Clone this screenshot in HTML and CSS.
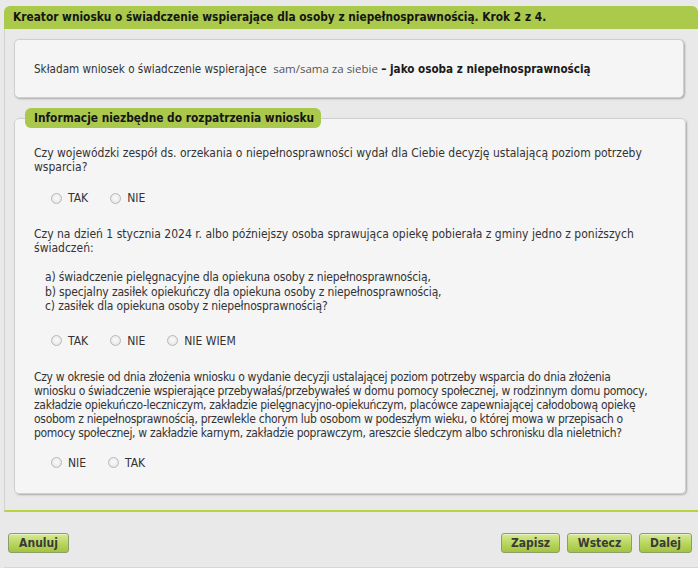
FILE: index.html
```html
<!DOCTYPE html>
<html lang="pl">
<head>
<meta charset="utf-8">
<title>Kreator wniosku</title>
<link rel="stylesheet" href="styles.css">
</head>
<body>
<div class="page">
  <div class="panel">
    <div class="panel-head">Kreator wniosku o świadczenie wspierające dla osoby z niepełnosprawnością. Krok 2 z 4.</div>
    <div class="panel-body">
      <div class="card intro">
        <span>Składam wniosek o świadczenie wspierające&nbsp; <span class="who">sam/sama za siebie</span> <b>– jako osoba z niepełnosprawnością</b></span>
      </div>
      <fieldset class="card info">
        <legend>Informacje niezbędne do rozpatrzenia wniosku</legend>
        <div class="info-body">
          <p class="q">Czy wojewódzki zespół ds. orzekania o niepełnosprawności wydał dla Ciebie decyzję ustalającą poziom potrzeby<br>wsparcia?</p>
          <div class="choices c1">
            <label class="choice"><input type="radio" name="q1"><span>TAK</span></label>
            <label class="choice"><input type="radio" name="q1"><span>NIE</span></label>
          </div>
          <p class="q q2">Czy na dzień 1 stycznia 2024 r. albo późniejszy osoba sprawująca opiekę pobierała z gminy jedno z poniższych<br>świadczeń:</p>
          <ul class="opts">
            <li>a) świadczenie pielęgnacyjne dla opiekuna osoby z niepełnosprawnością,</li>
            <li>b) specjalny zasiłek opiekuńczy dla opiekuna osoby z niepełnosprawnością,</li>
            <li>c) zasiłek dla opiekuna osoby z niepełnosprawnością?</li>
          </ul>
          <div class="choices c2">
            <label class="choice"><input type="radio" name="q2"><span>TAK</span></label>
            <label class="choice"><input type="radio" name="q2"><span>NIE</span></label>
            <label class="choice"><input type="radio" name="q2"><span>NIE WIEM</span></label>
          </div>
          <p class="q q3">Czy w okresie od dnia złożenia wniosku o wydanie decyzji ustalającej poziom potrzeby wsparcia do dnia złożenia<br>wniosku o świadczenie wspierające przebywałaś/przebywałeś w domu pomocy społecznej, w rodzinnym domu pomocy,<br>zakładzie opiekuńczo-leczniczym, zakładzie pielęgnacyjno-opiekuńczym, placówce zapewniającej całodobową opiekę<br>osobom z niepełnosprawnością, przewlekle chorym lub osobom w podeszłym wieku, o której mowa w przepisach o<br>pomocy społecznej, w zakładzie karnym, zakładzie poprawczym, areszcie śledczym albo schronisku dla nieletnich?</p>
          <div class="choices c3">
            <label class="choice"><input type="radio" name="q3"><span>NIE</span></label>
            <label class="choice"><input type="radio" name="q3"><span>TAK</span></label>
          </div>
        </div>
      </fieldset>
    </div>
  </div>
  <div class="actions">
    <button class="btn b-anuluj" type="button">Anuluj</button>
    <div class="actions-right">
      <button class="btn b-zapisz" type="button">Zapisz</button>
      <button class="btn b-wstecz" type="button">Wstecz</button>
      <button class="btn b-dalej" type="button">Dalej</button>
    </div>
  </div>
</div>
</body>
</html>
```
FILE: styles.css
```css
html, body {
  margin: 0;
  padding: 0;
}
body {
  background: #e9e9e9;
  font-family: "DejaVu Sans Condensed", "DejaVu Sans", sans-serif;
  font-size: 12px;
  color: #333;
  width: 698px;
  height: 568px;
  overflow: hidden;
}
.page {
  padding: 6px 0 0 4px;
}
.panel-head {
  height: 23px;
  line-height: 23px;
  background: #abc94b;
  border-radius: 6px 6px 0 0;
  padding-left: 9px;
  font-weight: bold;
  font-size: 11.8px;
  color: #151515;
  white-space: nowrap;
}
.panel-body {
  border-left: 1px solid #d2d2d2;
  border-bottom: 2px solid #b6d43c;
  padding: 10px 9px 16px 9px;
  background: #e9e9e9;
}
.card {
  background: #f5f5f5;
  border: 1px solid #cfcfcf;
  border-radius: 5px;
  box-shadow: 1px 1px 2px rgba(0, 0, 0, 0.28);
  width: 670px;
}
.intro {
  display: flex;
  align-items: center;
  padding-left: 19px;
  box-sizing: border-box;
  height: 59px;
  font-size: 11.6px;
  color: #333;
  white-space: nowrap;
}
.intro b {
  color: #1a1a1a;
}
.who {
  font-family: "Open Sans", "DejaVu Sans", sans-serif;
  font-size: 11.5px;
  color: #555;
}
.info {
  margin: 10px 0 0 0;
  padding: 0;
  min-width: 0;
}
.info legend {
  margin-left: 10px;
  padding: 0 7px 0 9px;
  height: 20px;
  line-height: 20px;
  background: #aac84c;
  border-radius: 6px;
  font-weight: bold;
  font-size: 11.8px;
  color: #151515;
}
.info-body {
  padding: 18px 10px 23px 19px;
}
.q {
  margin: 0;
  line-height: 14px;
  white-space: nowrap;
}
.q2, .q3 {
  margin-top: 22px;
}
.q3 {
  letter-spacing: -0.3px;
}
.opts {
  list-style: none;
  margin: 15px 0 0 0;
  padding: 0 0 0 11px;
  line-height: 14.5px;
  letter-spacing: -0.15px;
  white-space: nowrap;
}
.choices {
  display: flex;
  gap: 22px;
  padding-left: 17px;
  height: 14px;
  align-items: center;
}
.c1 { margin-top: 17px; }
.c2 { margin-top: 20px; }
.c3 { margin-top: 16px; }
.choice {
  display: flex;
  align-items: center;
  gap: 6px;
  color: #333;
}
.choice input {
  appearance: none;
  -webkit-appearance: none;
  margin: 0;
  width: 11px;
  height: 11px;
  border-radius: 50%;
  border: 1px solid #b4b9bd;
  background: radial-gradient(circle at 50% 45%, #fafafa 0%, #f0f0f0 45%, #d9dcde 100%);
  box-sizing: border-box;
}
.actions {
  display: flex;
  justify-content: space-between;
  align-items: flex-start;
  padding: 21px 6px 0 4px;
  height: 34px;
  border-bottom: 2px solid #d6d6d6;
}
.actions-right {
  display: flex;
  gap: 7px;
}
.btn {
  height: 20px;
  padding: 0;
  border: 1px solid #8c9c6c;
  border-radius: 3px;
  background: linear-gradient(#d6ea94, #b8d55c 55%, #a3c440);
  box-shadow: inset 0 1px 0 rgba(255, 255, 255, 0.45);
  font-family: "DejaVu Sans Condensed", "DejaVu Sans", sans-serif;
  font-weight: bold;
  font-size: 12px;
  color: #3a3a3a;
  text-align: center;
}
.b-anuluj { width: 61px; }
.b-zapisz { width: 59px; }
.b-wstecz { width: 65px; }
.b-dalej { width: 53px; }
```
